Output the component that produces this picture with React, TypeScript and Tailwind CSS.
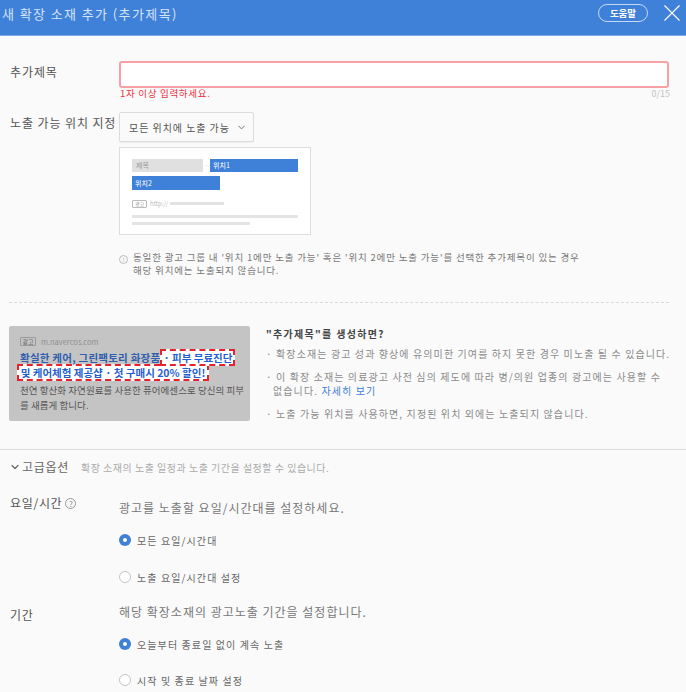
import { ChevronDown } from 'lucide-react'

const FONT = "font-['Noto_Sans_CJK_KR','Noto_Sans',sans-serif]"

function Radio({ checked, label, className }: { checked?: boolean; label: string; className: string }) {
  return (
    <div className={`flex items-center h-[14px] ${className}`}>
      {checked ? (
        <span className="w-[12px] h-[12px] rounded-full bg-[#3f80d8] flex items-center justify-center">
          <span className="w-[4px] h-[4px] rounded-full bg-white" />
        </span>
      ) : (
        <span className="w-[12px] h-[12px] rounded-full border border-[#c4c4c4] bg-white" />
      )}
      <span className="ml-[6px] text-[10px] tracking-[1.1px] text-[#666]">{label}</span>
    </div>
  )
}

function Preview() {
  return (
    <div className="ml-[119px] mt-[5px] w-[192px] h-[88px] border border-[#ddd] bg-white pl-[12px] pt-[11px]">
      <div className="flex items-center">
        <div className="w-[71px] h-[13px] bg-[#e0e0e0] pl-[4px] text-[7px] leading-[13px] text-[#999]">제목</div>
        <div className="w-[7px] text-center text-[7px] leading-[13px] text-[#ccc]">·</div>
        <div className="w-[88px] h-[13px] bg-[#3f80d8] pl-[3px] text-[7px] leading-[13px] text-white">위치1</div>
      </div>
      <div className="mt-[4px] w-[88px] h-[14px] bg-[#3f80d8] pl-[3px] text-[7px] leading-[14px] text-white">위치2</div>
      <div className="mt-[9px] flex items-center h-[9px]">
        <span className="w-[15px] h-[8px] border border-[#bbb] rounded-[1px] text-[5px] leading-[6px] text-center text-[#888]">광고</span>
        <span className="ml-[3px] text-[6px] text-[#bbb]">http://</span>
        <span className="ml-[2px] w-[54px] h-[3px] bg-[#e2e2e2]" />
      </div>
      <div className="mt-[7px] w-[166px] h-[3px] bg-[#e4e4e4]" />
      <div className="mt-[4px] w-[118px] h-[3px] bg-[#e4e4e4]" />
    </div>
  )
}

function AdSample() {
  return (
    <div className="w-[241px] h-[95px] shrink-0 rounded-[2px] bg-[#c4c4c4] pl-[11px] pt-[10px]">
      <div className="flex items-center h-[11px]">
        <span className="w-[16px] h-[9px] border border-[#999] rounded-[1px] text-[6px] leading-[7px] text-center text-[#666]">광고</span>
        <span className="ml-[5px] text-[7.5px] text-[#8f8f8f]">m.navercos.com</span>
      </div>
      <div className="mt-[2px] h-[17px] flex items-center text-[10.5px] font-bold text-[#2f5fae] whitespace-nowrap">
        <span className="tracking-[0.25px]">확실한 케어, 그린팩토리 화장품</span>
        <span className="w-[75px] h-[17px] text-center leading-[14px] bg-white border-2 border-dashed border-[#e8222c] text-[#1f5fd0]">· 피부 무료진단</span>
      </div>
      <div className="-ml-[3px] -mt-[2px] w-[192px] h-[17px] text-center leading-[14px] bg-white border-2 border-dashed border-[#e8222c] text-[10.5px] font-bold text-[#1f5fd0] whitespace-nowrap">
        및 케어체험 제공샵 · 첫 구매시 20% 할인!
      </div>
      <div className="mt-[2px] text-[9.5px] leading-[14.5px] tracking-[0.05px] text-[#555] whitespace-nowrap">
        천연 항산화 자연원료를 사용한 퓨어에센스로 당신의 피부
        <br />를 새롭게 합니다.
      </div>
    </div>
  )
}

function Tips() {
  return (
    <div className="ml-[16px] flex-1 text-[10px] text-[#8a8a8a] tracking-[1.1px] whitespace-nowrap">
      <div className="h-[14px] leading-[14px] mt-[1px] font-bold text-[#444] tracking-[1.3px]">"추가제목"를 생성하면?</div>
      <div className="mt-[6px] leading-[14px]">· 확장소재는 광고 성과 향상에 유의미한 기여를 하지 못한 경우 미노출 될 수 있습니다.</div>
      <div className="mt-[9px] pl-[7px] -indent-[7px] leading-[14px]">
        · 이 확장 소재는 의료광고 사전 심의 제도에 따라 병/의원 업종의 광고에는 사용할 수
        <br />없습니다. <span className="text-[#3f80d8]">자세히 보기</span>
      </div>
      <div className="mt-[9px] leading-[14px]">· 노출 가능 위치를 사용하면, 지정된 위치 외에는 노출되지 않습니다.</div>
    </div>
  )
}

export default function App() {
  return (
    <div className={`w-[686px] h-[692px] overflow-hidden bg-[#fafafa] ${FONT}`}>
      <header className="h-[36px] bg-[#3f80d8] border-b border-[#7fa9e6] flex items-start pl-[2px] pr-[6px] pt-[4px]">
        <h1 className="text-[13px] leading-[20px] font-normal tracking-[1.4px] text-[#d5e3f7] flex-1">새 확장 소재 추가 (추가제목)</h1>
        <button className="w-[50px] h-[18px] rounded-full border border-[#c6d9f3] text-[9.5px] font-bold leading-[15px] text-white">도움말</button>
        <svg className="ml-[16px] mt-[1px] w-[16px] h-[16px]" viewBox="0 0 16 16" fill="none" stroke="#ffffff" strokeWidth="1.2">
          <path d="M0.5 0.5 L15.5 15.5 M15.5 0.5 L0.5 15.5" />
        </svg>
      </header>

      <div className="flex pt-[25px] pl-[10px]">
        <div className="w-[109px] pt-[3px] text-[12px] leading-[16px] tracking-[0.9px] text-[#555]">추가제목</div>
        <div className="w-[550px] h-[27px] bg-white border-2 border-[#f9a0a4] rounded-[3px]" />
      </div>
      <div className="flex justify-between pl-[120px] w-[670px] h-[11px] items-center">
        <span className="text-[9.5px] text-[#e8323c] tracking-[0.7px]">1자 이상 입력하세요.</span>
        <span className="text-[9px] text-[#c2c2c2]">0/15</span>
      </div>

      <div className="flex items-start pl-[10px] mt-[13px]">
        <div className="w-[109px] pt-[3px] text-[12px] leading-[16px] tracking-[0.9px] text-[#555] whitespace-nowrap">노출 가능 위치 지정</div>
        <div className="w-[135px] h-[30px] bg-[#fafafa] border border-[#dcdcdc] rounded-[2px] shadow-[0_1px_1px_rgba(0,0,0,0.05)] flex items-center pl-[9px]">
          <span className="text-[10px] tracking-[0.95px] text-[#555] whitespace-nowrap">모든 위치에 노출 가능</span>
          <ChevronDown className="ml-[6px] w-[11px] h-[11px] text-[#666]" strokeWidth={2} />
        </div>
      </div>

      <Preview />

      <div className="mt-[16px] ml-[119px] flex w-[470px]">
        <span className="mt-[4px] w-[9px] h-[9px] shrink-0 rounded-full border border-[#bbb] text-[6px] leading-[7px] text-center text-[#999]">!</span>
        <p className="ml-[5px] text-[9.5px] leading-[12.5px] tracking-[0.83px] text-[#777] whitespace-nowrap">
          동일한 광고 그룹 내 '위치 1에만 노출 가능' 혹은 '위치 2에만 노출 가능'를 선택한 추가제목이 있는 경우
          <br />
          해당 위치에는 노출되지 않습니다.
        </p>
      </div>

      <div className="mt-[26px] mx-[9px] w-[660px] border-t border-dashed border-[#d9d9d9]" />

      <div className="flex mt-[23px] pl-[9px]">
        <AdSample />
        <Tips />
      </div>

      <div className="mt-[28px] border-t border-[#dcdcdc] pl-[9px] pt-[5px] flex items-center h-[24px] box-content">
        <ChevronDown className="w-[12px] h-[12px] text-[#666]" strokeWidth={2.4} />
        <span className="ml-[1px] text-[12px] tracking-[0.7px] text-[#666]">고급옵션</span>
        <span className="ml-[12px] text-[10px] tracking-[0.5px] text-[#aaa]">확장 소재의 노출 일정과 노출 기간을 설정할 수 있습니다.</span>
      </div>

      <div className="flex pl-[10px] mt-[15px]">
        <div className="w-[109px] flex items-start pt-[1px]">
          <span className="text-[12px] leading-[16px] tracking-[0.7px] text-[#555]">요일/시간</span>
          <span className="ml-[3px] mt-[3px] w-[11px] h-[11px] rounded-full border border-[#999] text-[8px] leading-[9px] text-center text-[#888]">?</span>
        </div>
        <div>
          <p className="mt-[6px] text-[12px] leading-[16px] tracking-[1px] text-[#777] whitespace-nowrap">광고를 노출할 요일/시간대를 설정하세요.</p>
          <Radio checked label="모든 요일/시간대" className="mt-[17px]" />
          <Radio label="노출 요일/시간대 설정" className="mt-[23px]" />
        </div>
      </div>

      <div className="flex pl-[10px] mt-[20px]">
        <div className="w-[109px] text-[12px] leading-[16px] tracking-[0.7px] text-[#555] pt-[3px]">기간</div>
        <div>
          <p className="text-[12px] leading-[16px] tracking-[1px] text-[#777] whitespace-nowrap">해당 확장소재의 광고노출 기간을 설정합니다.</p>
          <Radio checked label="오늘부터 종료일 없이 계속 노출" className="mt-[17px]" />
          <Radio label="시작 및 종료 날짜 설정" className="mt-[22px]" />
        </div>
      </div>
    </div>
  )
}
